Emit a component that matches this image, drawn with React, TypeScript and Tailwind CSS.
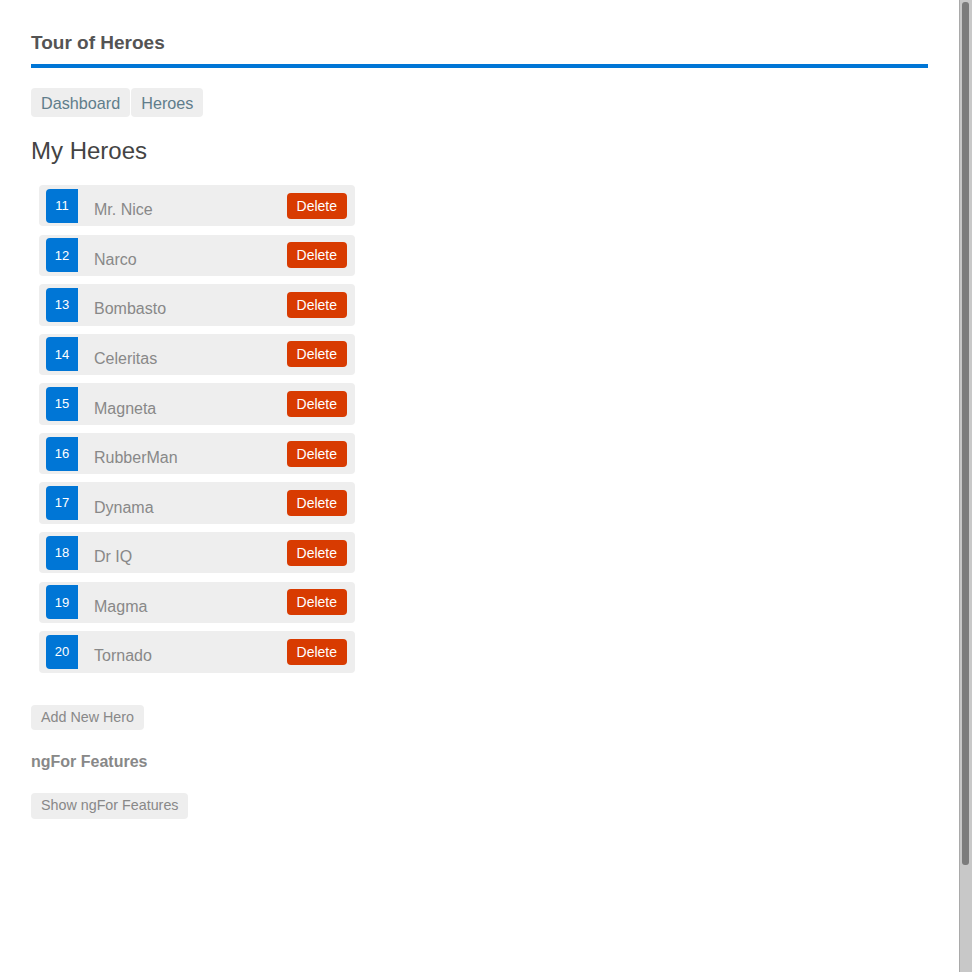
import React from "react";

const heroes = [
  { id: 11, name: "Mr. Nice" },
  { id: 12, name: "Narco" },
  { id: 13, name: "Bombasto" },
  { id: 14, name: "Celeritas" },
  { id: 15, name: "Magneta" },
  { id: 16, name: "RubberMan" },
  { id: 17, name: "Dynama" },
  { id: 18, name: "Dr IQ" },
  { id: 19, name: "Magma" },
  { id: 20, name: "Tornado" },
];

export default function App() {
  return (
    <div
      className="flex h-[972px] w-full overflow-hidden bg-white"
      style={{ fontFamily: '"Liberation Sans", Arial, sans-serif' }}
    >
      <div className="flex-1 pl-[31px] pr-[31px] pt-[32px]">
        <div className="border-b-4 border-[#0076d6] pb-[10px]">
          <h1 className="text-[19px] font-bold leading-[22px] text-[#545454]">Tour of Heroes</h1>
        </div>
        <nav className="mt-[20px] flex">
          <a className="flex h-[29px] items-center rounded-[4px] bg-[#eeeeee] px-[10px] pt-[1px] text-[16.2px] text-[#607d8b]">
            Dashboard
          </a>
          <a className="ml-[1px] flex h-[29px] items-center rounded-[4px] bg-[#eeeeee] px-[10px] pt-[1px] text-[16.2px] text-[#607d8b]">
            Heroes
          </a>
        </nav>
        <h2 className="mt-[20px] text-[24px] leading-[28px] text-[#444444]">My Heroes</h2>
        <ul className="ml-[8px] mt-[20px] flex w-[316px] flex-col">
          {heroes.map((h) => (
            <li
              key={h.id}
              className="mb-[8.2px] flex h-[41.4px] items-center rounded-[4px] bg-[#eeeeee] pl-[7px] pr-[8px]"
            >
              <span className="flex h-[34px] w-[32px] items-center justify-center rounded-l-[4px] bg-[#0076d6] text-[13px] text-white">
                {h.id}
              </span>
              <span className="ml-[16px] mt-[9px] flex-1 text-[16px] text-[#888888]">{h.name}</span>
              <button className="flex h-[26px] items-center rounded-[4px] bg-[#d83b01] px-[10px] pt-[1px] text-[14px] text-white">
                Delete
              </button>
            </li>
          ))}
        </ul>
        <button className="mt-[24px] flex h-[25px] items-center rounded-[4px] bg-[#eeeeee] px-[10px] text-[14.3px] text-[#888888]">
          Add New Hero
        </button>
        <h3 className="mt-[22px] text-[16px] font-bold leading-[20px] text-[#888888]">ngFor Features</h3>
        <button className="mt-[21px] flex h-[26px] items-center rounded-[4px] bg-[#eeeeee] px-[10px] text-[14.3px] text-[#888888]">
          Show ngFor Features
        </button>
      </div>
      <div className="flex h-full w-[13px] shrink-0 flex-col border-l border-[#a9a9a9] bg-[#c8c8c8] pl-[2px] pr-[3px] pt-[2px]">
        <div className="h-[863px] w-full rounded-[3px] bg-[#7c7c7c]" />
      </div>
    </div>
  );
}
